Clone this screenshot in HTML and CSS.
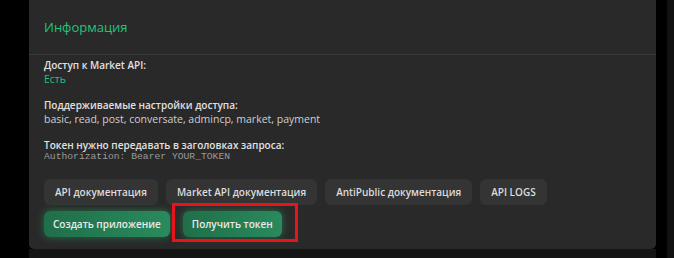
FILE: index.html
```html
<!DOCTYPE html>
<html lang="ru">
<head>
    <meta charset="UTF-8">
    <meta name="viewport" content="width=device-width, initial-scale=1.0">
    <title>Информация</title>
    <link rel="stylesheet" href="styles.css">
</head>
<body>

<div class="page">
    <div class="main">
        <div class="card">
            <div class="card-header">
                <h2>Информация</h2>
            </div>
            <div class="card-body">
                <div class="info-group">
                    <div class="info-label">Доступ к Market API:</div>
                    <div class="info-value green">Есть</div>
                </div>
                <div class="info-group">
                    <div class="info-label">Поддерживаемые настройки доступа:</div>
                    <div class="info-value">basic, read, post, conversate, admincp, market, payment</div>
                </div>
                <div class="info-group">
                    <div class="info-label">Токен нужно передавать в заголовках запроса:</div>
                    <code class="info-code">Authorization: Bearer YOUR_TOKEN</code>
                </div>

                <div class="btn-row">
                    <button class="btn btn-gray">API документация</button>
                    <button class="btn btn-gray">Market API документация</button>
                    <button class="btn btn-gray">AntiPublic документация</button>
                    <button class="btn btn-gray">API LOGS</button>
                </div>
                <div class="btn-row btn-row-green">
                    <button class="btn btn-green">Создать приложение</button>
                    <span class="highlight">
                        <button class="btn btn-green">Получить токен</button>
                    </span>
                </div>
            </div>
        </div>
        <div class="under"></div>
    </div>
    <div class="side"></div>
</div>

</body>
</html>
```

FILE: styles.css
```css
body {
    margin: 0;
    background-color: #000;
    font-family: "Open Sans", Arial, sans-serif;
    color: #ddd;
    height: 258px;
    overflow: hidden;
}
.page {
    display: flex;
    height: 258px;
}
.main {
    width: 627px;
    margin-left: 29px;
    display: flex;
    flex-direction: column;
}
.side {
    width: 7px;
    margin-left: 11px;
    background-color: #111;
}
.card {
    background-color: #292929;
    border-radius: 0 0 5px 5px;
    height: 249px;
}
.under {
    flex: 1;
    background-color: #151515;
}
.card-header {
    height: 54px;
    border-bottom: 1px solid #3a3a3a;
    display: flex;
    align-items: center;
    padding: 0 15px;
}
h2 {
    margin: 0;
    font-size: 13px;
    font-weight: 500;
    color: #22c47c;
}
.card-body {
    padding: 3px 15px 0;
}
.info-group {
    margin-bottom: 12px;
    font-size: 10.5px;
}
.info-label {
    font-size: 10px;
    font-weight: 600;
    line-height: 14px;
    color: #e0e0e0;
}
.info-value {
    line-height: 14px;
    color: #cfcfcf;
}
.info-value.green {
    color: #22c47c;
}
.info-code {
    display: block;
    font-family: "Liberation Mono", "Courier New", monospace;
    font-size: 9.7px;
    line-height: 10px;
    color: #9a9a9a;
}
.btn-row {
    display: flex;
    gap: 8px;
    margin-top: 17px;
}
.btn-row-green {
    margin-top: 6px;
    gap: 13px;
}
.btn {
    height: 26px;
    padding: 0 11px;
    border: none;
    border-radius: 6px;
    font-family: "Open Sans", Arial, sans-serif;
    font-size: 10px;
    font-weight: 600;
    cursor: pointer;
}
.btn-gray {
    background-color: #343434;
    color: #dcdcdc;
}
.btn-green {
    padding: 0 9px;
    background: linear-gradient(90deg, #1f6f49, #2a8a5d);
    color: #eaeaea;
    box-shadow: 0 0 8px rgba(40, 170, 105, 0.55);
}
.highlight {
    position: relative;
}
.highlight::after {
    content: "";
    position: absolute;
    left: -11px;
    top: -8px;
    right: -16px;
    bottom: -5px;
    border: 3px solid #e8141c;
}
```
